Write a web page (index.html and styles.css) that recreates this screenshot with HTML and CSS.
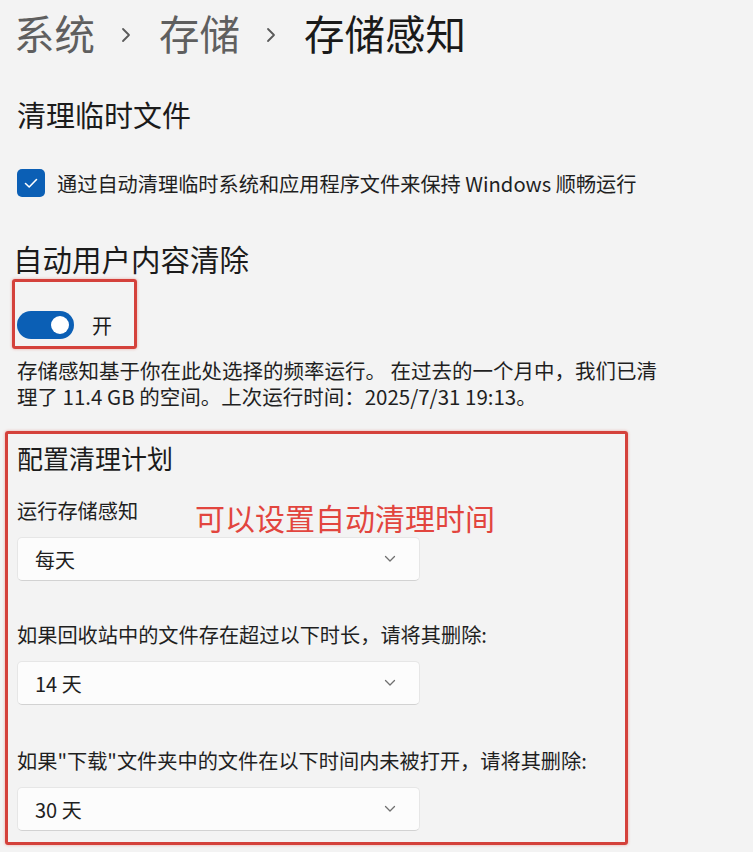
FILE: index.html
```html
<html>
  <head>
    <title>存储感知</title>
    <link rel="stylesheet" href="styles.css">
  </head>
  <body>
    <div class="crumbs">
      <span class="crumb">系统</span>
      <svg class="sep" width="12" height="16" viewBox="0 0 12 16"><path d="M3 2 L9 8 L3 14" fill="none" stroke="#5a5a5a" stroke-width="1.8" stroke-linecap="round" stroke-linejoin="round"/></svg>
      <span class="crumb">存储</span>
      <svg class="sep" width="12" height="16" viewBox="0 0 12 16"><path d="M3 2 L9 8 L3 14" fill="none" stroke="#5a5a5a" stroke-width="1.8" stroke-linecap="round" stroke-linejoin="round"/></svg>
      <span class="crumb current">存储感知</span>
    </div>

    <h2 class="title first">清理临时文件</h2>

    <div class="check-row">
      <span class="checkbox">
        <svg width="16" height="16" viewBox="0 0 16 16"><path d="M2.5 8.5 L6.2 12 L13.5 4.5" fill="none" stroke="#ffffff" stroke-width="1.6" stroke-linecap="round" stroke-linejoin="round"/></svg>
      </span>
      <span>通过自动清理临时系统和应用程序文件来保持 Windows 顺畅运行</span>
    </div>

    <h2 class="title second">自动用户内容清除</h2>

    <div class="mark toggle-box">
      <span class="toggle"><span class="knob"></span></span>
      <span class="toggle-label">开</span>
    </div>

    <p class="desc">存储感知基于你在此处选择的频率运行。 在过去的一个月中，我们已清理了 11.4 GB 的空间。上次运行时间：2025/7/31 19:13。</p>

    <div class="mark plan">
      <h3 class="plan-title">配置清理计划</h3>
      <div class="note">可以设置自动清理时间</div>

      <div class="label l1">运行存储感知</div>
      <div class="select">
        <span>每天</span>
        <svg width="12" height="8" viewBox="0 0 12 8"><path d="M1.5 1.5 L6 6 L10.5 1.5" fill="none" stroke="#707070" stroke-width="1.3" stroke-linecap="round" stroke-linejoin="round"/></svg>
      </div>

      <div class="label l2">如果回收站中的文件存在超过以下时长，请将其删除:</div>
      <div class="select">
        <span>14 天</span>
        <svg width="12" height="8" viewBox="0 0 12 8"><path d="M1.5 1.5 L6 6 L10.5 1.5" fill="none" stroke="#707070" stroke-width="1.3" stroke-linecap="round" stroke-linejoin="round"/></svg>
      </div>

      <div class="label l3">如果"下载"文件夹中的文件在以下时间内未被打开，请将其删除:</div>
      <div class="select">
        <span>30 天</span>
        <svg width="12" height="8" viewBox="0 0 12 8"><path d="M1.5 1.5 L6 6 L10.5 1.5" fill="none" stroke="#707070" stroke-width="1.3" stroke-linecap="round" stroke-linejoin="round"/></svg>
      </div>
    </div>
  </body>
</html>
```

FILE: styles.css
```css
body {
  margin: 0;
  padding: 0 0 0 17px;
  background-color: #f3f3f3;
  color: #1b1b1b;
  font-family: "Noto Sans CJK SC", "Noto Sans", sans-serif;
  width: 736px;
  height: 852px;
  overflow: hidden;
}
.crumbs {
  display: flex;
  align-items: center;
  height: 66px;
  margin-left: -3px;
  font-size: 40.5px;
}
.crumb {
  color: #5f5f5f;
  line-height: 66px;
}
.crumb.current {
  color: #1a1a1a;
}
.sep {
  margin: 4px 27px 0 25px;
}
.title {
  margin: 0;
  font-size: 29px;
  font-weight: 400;
  line-height: 40px;
}
.title.first {
  margin-top: 28px;
}
.title.second {
  margin-top: 40px;
  margin-left: -4px;
  font-size: 29.5px;
}
.check-row {
  display: flex;
  align-items: center;
  height: 30px;
  margin-top: 34px;
  font-size: 20.2px;
  color: #1f1f1f;
}
.checkbox {
  display: flex;
  align-items: center;
  justify-content: center;
  width: 28px;
  height: 28px;
  margin-right: 12px;
  border-radius: 5px;
  background-color: #0b5fb5;
}
.mark {
  border: 3px solid #d4413b;
  border-radius: 3px;
  box-shadow: 0 0 3px rgba(220, 70, 60, 0.45);
}
.toggle-box {
  display: flex;
  align-items: center;
  box-sizing: border-box;
  width: 125px;
  height: 70px;
  margin: 1px 0 0 -5px;
  padding: 22px 0 0 2px;
}
.toggle {
  display: flex;
  align-items: center;
  justify-content: flex-end;
  width: 57px;
  height: 28px;
  padding-right: 5px;
  box-sizing: border-box;
  border-radius: 14px;
  background-color: #0b5fb5;
}
.knob {
  width: 18px;
  height: 18px;
  border-radius: 50%;
  background-color: #ffffff;
}
.toggle-label {
  margin-left: 18px;
  font-size: 20px;
}
.desc {
  margin: 8px 0 0;
  width: 645px;
  font-size: 20.5px;
  line-height: 26px;
  color: #1f1f1f;
}
.plan {
  position: relative;
  width: 623px;
  height: 414px;
  margin: 22px 0 0 -12px;
  padding: 6px 0 0 9px;
  box-sizing: border-box;
}
.plan-title {
  margin: 0;
  font-size: 26px;
  font-weight: 400;
  line-height: 36px;
}
.note {
  position: absolute;
  left: 187px;
  top: 63px;
  font-size: 30px;
  line-height: 40px;
  color: #e2453e;
}
.label {
  font-size: 20.2px;
  line-height: 26px;
  color: #1f1f1f;
}
.l1 {
  margin-top: 22px;
}
.l2 {
  margin-top: 41px;
}
.l3 {
  margin-top: 43px;
}
.select {
  display: flex;
  align-items: center;
  justify-content: space-between;
  width: 403px;
  height: 44px;
  margin-top: 13px;
  padding: 0 23px 0 17px;
  box-sizing: border-box;
  background-color: #fcfcfc;
  border: 1px solid #e6e6e6;
  border-bottom-color: #d2d2d2;
  border-radius: 5px;
  font-size: 20px;
  color: #1f1f1f;
}
```
